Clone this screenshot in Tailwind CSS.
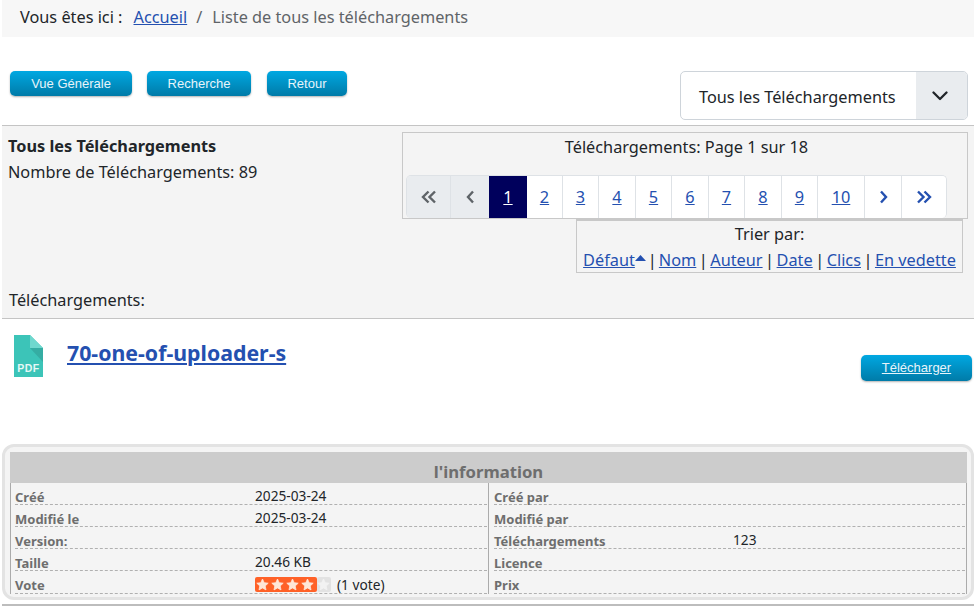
<!DOCTYPE html>
<html lang="fr">
<head>
    <meta charset="UTF-8">
    <title>Liste de tous les téléchargements</title>
    <script src="https://cdn.jsdelivr.net/npm/@tailwindcss/browser@4"></script>
</head>
<body class="bg-white text-[#212529] font-['Noto_Sans','Open_Sans',sans-serif] text-[16.3px] leading-[24px] overflow-hidden">
    <div class="w-[979px] h-[615px] pl-[2px] pr-[5px]">
        <!-- breadcrumb -->
        <div class="h-[37px] bg-[#f7f7f7] pl-[18px] pt-[5px] flex text-[#5f6468]">
            <span class="text-[#212529] mr-[11px]">Vous êtes ici :</span>
            <a href="#" class="text-[#2450b0] underline mr-[9px]">Accueil</a>
            <span class="mr-[10px]">/</span>
            <span>Liste de tous les téléchargements</span>
        </div>

        <!-- toolbar -->
        <div class="h-[89px] pt-[34px] pl-[8px] pr-[6px] flex justify-between items-start border-b border-[#c4c4c4]">
            <div class="flex gap-[15px] font-['Liberation_Sans',sans-serif] text-[13px] text-[#e8f4fa]">
                <a class="h-[25px] w-[122px] flex items-center justify-center rounded-[5px] bg-gradient-to-b from-[#00a8e2] to-[#007ba8] shadow-[0_1px_2px_rgba(0,0,0,0.3)]">Vue Générale</a>
                <a class="h-[25px] w-[104px] flex items-center justify-center rounded-[5px] bg-gradient-to-b from-[#00a8e2] to-[#007ba8] shadow-[0_1px_2px_rgba(0,0,0,0.3)]">Recherche</a>
                <a class="ml-[1px] h-[25px] w-[80px] flex items-center justify-center rounded-[5px] bg-gradient-to-b from-[#00a8e2] to-[#007ba8] shadow-[0_1px_2px_rgba(0,0,0,0.3)]">Retour</a>
            </div>
            <div class="w-[288px] h-[49px] flex border border-[#ced4da] rounded-[5px] overflow-hidden">
                <div class="flex-1 pl-[18px] pt-[2px] flex items-center">Tous les Téléchargements</div>
                <div class="w-[51px] bg-[#e9ecef] flex items-center justify-center pr-[3px]">
                    <svg width="16" height="16" viewBox="0 0 16 16" fill="none" stroke="#212529" stroke-width="2.3" stroke-linecap="round" stroke-linejoin="round"><path d="M1.500 4.500L8 11l6.500-6.500"/></svg>
                </div>
            </div>
        </div>

        <!-- list header -->
        <div class="h-[193px] bg-[#f4f4f4] border-b border-[#c4c4c4] flex flex-col">
            <div class="flex justify-between pl-[6px] pr-[6px] pt-[6px]">
                <div class="pt-[1px]">
                    <div class="font-bold leading-[26px]">Tous les Téléchargements</div>
                    <div class="leading-[26px]">Nombre de Téléchargements: 89</div>
                </div>
                <div class="w-[566px]">
                    <div class="h-[87px] border border-[#c8c8c8] pl-[3px]">
                        <div class="text-center leading-[28px] h-[42px]">Téléchargements: Page 1 sur 18</div>
                        <div class="flex h-[43px] w-[541px] text-[#2450b0] rounded-[5px] border border-[#dee2e6] border-b-0 overflow-hidden">
                            <span class="w-[44px] bg-[#e9ecef] border-r border-[#dee2e6] flex items-center justify-center">
                                <svg width="16" height="14" viewBox="0 0 16 14" fill="none" stroke="#5f6468" stroke-width="2.4"><path d="M7.5 1.5L2 7l5.5 5.5M14 1.5L8.500 7l5.500 5.500"/></svg>
                            </span>
                            <span class="w-[38px] bg-[#e9ecef] flex items-center justify-center">
                                <svg width="9" height="14" viewBox="0 0 9 14" fill="none" stroke="#5f6468" stroke-width="2.4"><path d="M7 1.500L2 7l5 5.500"/></svg>
                            </span>
                            <a class="w-[38px] bg-[#00005c] text-white underline flex items-center justify-center">1</a>
                            <a class="w-[36px] bg-white border-r border-[#dee2e6] underline flex items-center justify-center">2</a>
                            <a class="w-[36px] bg-white border-r border-[#dee2e6] underline flex items-center justify-center">3</a>
                            <a class="w-[37px] bg-white border-r border-[#dee2e6] underline flex items-center justify-center">4</a>
                            <a class="w-[36px] bg-white border-r border-[#dee2e6] underline flex items-center justify-center">5</a>
                            <a class="w-[37px] bg-white border-r border-[#dee2e6] underline flex items-center justify-center">6</a>
                            <a class="w-[36px] bg-white border-r border-[#dee2e6] underline flex items-center justify-center">7</a>
                            <a class="w-[37px] bg-white border-r border-[#dee2e6] underline flex items-center justify-center">8</a>
                            <a class="w-[36px] bg-white border-r border-[#dee2e6] underline flex items-center justify-center">9</a>
                            <a class="w-[47px] bg-white border-r border-[#dee2e6] underline flex items-center justify-center">10</a>
                            <span class="w-[37px] bg-white border-r border-[#dee2e6] flex items-center justify-center">
                                <svg width="9" height="14" viewBox="0 0 9 14" fill="none" stroke="#2450b0" stroke-width="2.4"><path d="M2 1.500L7 7l-5 5.500"/></svg>
                            </span>
                            <span class="flex-1 bg-white flex items-center justify-center">
                                <svg width="16" height="14" viewBox="0 0 16 14" fill="none" stroke="#2450b0" stroke-width="2.4"><path d="M2 1.500L7.500 7 2 12.500M8.500 1.500L14 7l-5.500 5.500"/></svg>
                            </span>
                        </div>
                    </div>
                    <div class="ml-[174px] mr-[5px] h-[54px] border border-[#c8c8c8] border-t-2 text-center pt-[1px]">
                        <div class="leading-[24px]">Trier par:</div>
                        <div class="leading-[28px] flex justify-center items-center whitespace-nowrap">
                            <a class="text-[#2450b0] underline">Défaut</a>
                            <svg class="mb-[4px]" width="11" height="6" viewBox="0 0 11 6" fill="#2450b0"><path d="M5.500 0L11 6H0z"/></svg>
                            <span class="mx-[2px]">|</span><a class="text-[#2450b0] underline">Nom</a>
                            <span class="mx-[2.500px]">|</span><a class="text-[#2450b0] underline">Auteur</a>
                            <span class="mx-[2.500px]">|</span><a class="text-[#2450b0] underline">Date</a>
                            <span class="mx-[2.500px]">|</span><a class="text-[#2450b0] underline">Clics</a>
                            <span class="mx-[2.500px]">|</span><a class="text-[#2450b0] underline">En vedette</a>
                        </div>
                    </div>
                </div>
            </div>
            <div class="mt-auto pl-[7px] pb-[6px]">Téléchargements:</div>
        </div>

        <!-- download item -->
        <div class="h-[125px] flex items-start pl-[12px] pr-[2px]">
            <svg class="mt-[16px]" width="29" height="42" viewBox="0 0 29 42">
                <path d="M0 0H16L29 13V42H0z" fill="#3cc4b8"/>
                <path d="M16 0L29 13H16z" fill="#6fd8ce"/>
                <path d="M16 13H29V27z" fill="#35ada3"/>
                <text x="14.500" y="37" text-anchor="middle" fill="#e6f8f6" font-size="10.500" font-weight="700" letter-spacing="0.5" font-family="Liberation Sans">PDF</text>
            </svg>
            <a class="ml-[24px] mt-[19px] text-[21.3px] leading-[30px] font-bold text-[#2450b0] underline">70-one-of-uploader-s</a>
            <a class="ml-auto mt-[36px] w-[111px] h-[26px] flex items-center justify-center rounded-[5px] bg-gradient-to-b from-[#00a8e2] to-[#007ba8] shadow-[0_1px_2px_rgba(0,0,0,0.3)] font-['Liberation_Sans',sans-serif] text-[13px] text-[#e8f4fa] underline">Télécharger</a>
        </div>

        <!-- information -->
        <div class="h-[156px] border-[3px] border-[#e3e3e3] rounded-[12px] bg-[#f4f4f4] pt-[5px] pl-[5px] pr-[4px] w-[972px]">
            <div class="h-[31px] bg-[#cccccc] text-center font-bold text-[16.700px] text-[#6e6e6e] leading-[40px]">l'information</div>
            <div class="grid grid-cols-[478px_1fr] text-[13px] border-x border-[#ababab]">
                <div class="border-r border-[#ababab] pl-[4px] pr-[1px]">
                    <div class="h-[22px] border-b border-dashed border-[#b0b0b0] flex"><b class="w-[240px] text-[#6e6e6e] pt-[2px]">Créé</b><span class="leading-[26px] text-[13.7px]">2025-03-24</span></div>
                    <div class="h-[22px] border-b border-dashed border-[#b0b0b0] flex"><b class="w-[240px] text-[#6e6e6e] pt-[2px]">Modifié le</b><span class="leading-[26px] text-[13.7px]">2025-03-24</span></div>
                    <div class="h-[22px] border-b border-dashed border-[#b0b0b0] flex"><b class="w-[240px] text-[#6e6e6e] pt-[2px]">Version:</b></div>
                    <div class="h-[22px] border-b border-dashed border-[#b0b0b0] flex"><b class="w-[240px] text-[#6e6e6e] pt-[2px]">Taille</b><span class="leading-[26px] text-[13.7px]">20.46 KB</span></div>
                    <div class="h-[23px] border-b border-dashed border-[#b0b0b0] flex">
                        <b class="w-[240px] text-[#6e6e6e] pt-[2px]">Vote</b>
                        <span class="flex items-center h-[22px] pt-[5px]">
                            <svg width="76" height="15" viewBox="0 0 76 15" stroke-linejoin="round">
                                <rect width="62" height="15" rx="2" fill="#ff6127"/>
                                <rect x="62" width="14" height="15" rx="2" fill="#e2e2e2"/>
                                <path d="M7.500 2l1.700 3.700 4 .5-3 2.700.8 4-3.500-2-3.500 2 .8-4-3-2.700 4-.5z" fill="#ffe6d8" stroke="#ffe6d8" stroke-width=".8"/>
                                <path d="M22.500 2l1.700 3.700 4 .5-3 2.700.8 4-3.500-2-3.500 2 .8-4-3-2.700 4-.5z" fill="#ffe6d8" stroke="#ffe6d8" stroke-width=".8"/>
                                <path d="M37.500 2l1.700 3.700 4 .5-3 2.700.8 4-3.500-2-3.500 2 .8-4-3-2.700 4-.5z" fill="#ffe6d8" stroke="#ffe6d8" stroke-width=".8"/>
                                <path d="M52.500 2l1.700 3.700 4 .5-3 2.700.8 4-3.500-2-3.500 2 .8-4-3-2.700 4-.5z" fill="#ffe6d8" stroke="#ffe6d8" stroke-width=".8"/>
                                <path d="M68.500 2l1.700 3.700 4 .5-3 2.700.8 4-3.500-2-3.500 2 .8-4-3-2.700 4-.5z" fill="#f2f2f2" stroke="#f2f2f2" stroke-width=".8"/>
                            </svg>
                            <span class="ml-[6px] text-[13.7px]">(1 vote)</span>
                        </span>
                    </div>
                </div>
                <div class="pl-[5px] pr-[1px]">
                    <div class="h-[22px] border-b border-dashed border-[#b0b0b0] flex"><b class="w-[239px] text-[#6e6e6e] pt-[2px]">Créé par</b></div>
                    <div class="h-[22px] border-b border-dashed border-[#b0b0b0] flex"><b class="w-[239px] text-[#6e6e6e] pt-[2px]">Modifié par</b></div>
                    <div class="h-[22px] border-b border-dashed border-[#b0b0b0] flex"><b class="w-[239px] text-[#6e6e6e] pt-[2px]">Téléchargements</b><span class="leading-[26px] text-[13.7px]">123</span></div>
                    <div class="h-[22px] border-b border-dashed border-[#b0b0b0] flex"><b class="w-[239px] text-[#6e6e6e] pt-[2px]">Licence</b></div>
                    <div class="h-[23px] border-b border-dashed border-[#b0b0b0] flex"><b class="w-[239px] text-[#6e6e6e] pt-[2px]">Prix</b></div>
                </div>
            </div>
        </div>
        <div class="mt-[4px] h-[2px] bg-[#bdbdbd] w-[972px]"></div>
    </div>
</body>
</html>
